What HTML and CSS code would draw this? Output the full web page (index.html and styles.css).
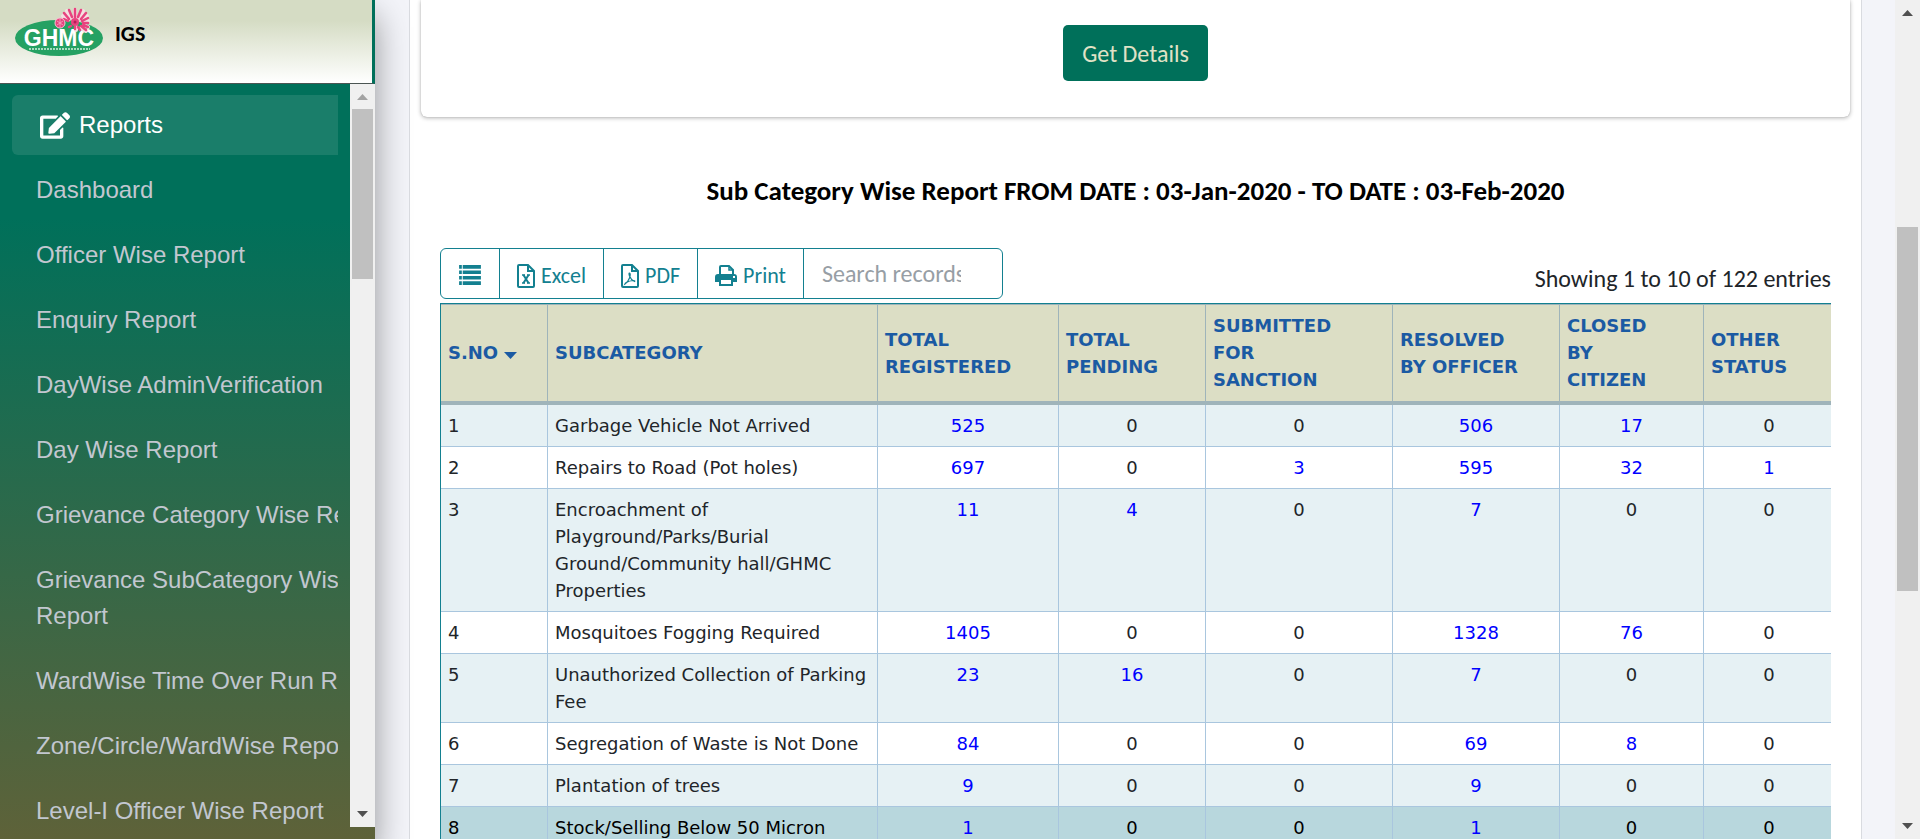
FILE: index.html
```html
<!DOCTYPE html>
<html lang="en">
<head>
<meta charset="utf-8">
<title>IGS - Sub Category Wise Report</title>
<link rel="stylesheet" href="styles.css">
</head>
<body>
<aside class="sidebar">
  <header class="brand">
    <svg class="brand-logo" viewBox="0 0 90 50" role="img" aria-label="GHMC">
      <ellipse cx="44" cy="31" rx="44" ry="18" fill="#25a163"/>
      <text x="44" y="39" text-anchor="middle" class="logo-text">GHMC</text>
      <path d="M14 42h61" stroke="#a9dcc0" stroke-width="2" stroke-dasharray="2 1"/>
      <g stroke="#f6dfe2" stroke-width="4" stroke-linecap="round">
        <path d="M60 10V3M56 11l-4-7M64 11l4-7M53 13l-5-4M67 13l5-4M69 15l4-1M69 18l4 2M66 21l5 3M61 20v3"/>
      </g>
      <g stroke="#e8437f" stroke-width="2.500" stroke-linecap="round">
        <path d="M60 10V2M57 10l-3-7M63 10l3-7M54 12l-5-6M66 12l5-6M53 14l-4-2M67 14l6-3M68 16h5M68 18l5 2M66 19l5 4M63 20l2 3M60 20v2M56 19l-2 1"/>
      </g>
      <circle cx="60" cy="15" r="4" fill="#e8437f"/>
      <circle cx="60" cy="15" r="1.500" fill="#b51f58"/>
      <circle cx="45" cy="16" r="5" fill="#e8437f" stroke="#f9c3d6"/>
      <path d="M42 14l6 4M42 18l6-4M45 12v8" stroke="#f9a7c4" stroke-width=".8"/>
    </svg>
    <span class="brand-name">IGS</span>
  </header>
  <div class="sidebar-body">
    <nav class="nav" aria-label="Reports">
      <ul class="nav-list">
        <li><a class="nav-link active" href="#">
          <svg class="nav-icon" viewBox="0 0 576 512" fill="currentColor" aria-hidden="true"><path d="M402.6 83.2l90.2 90.2c3.8 3.8 3.8 10 0 13.8L274.4 405.6l-92.8 10.3c-12.4 1.4-22.9-9.1-21.5-21.5l10.3-92.8L388.8 83.2c3.8-3.8 10-3.8 13.8 0zm162-22.9l-48.8-48.8c-15.2-15.2-39.9-15.2-55.2 0l-35.4 35.4c-3.8 3.8-3.8 10 0 13.8l90.2 90.2c3.8 3.8 10 3.8 13.8 0l35.4-35.4c15.2-15.3 15.2-40 0-55.2zM384 346.2V448H64V128h229.8c3.2 0 6.2-1.3 8.5-3.5l40-40c7.6-7.6 2.2-20.5-8.5-20.5H48C21.5 64 0 85.5 0 112v352c0 26.5 21.5 48 48 48h352c26.5 0 48-21.5 48-48V306.2c0-10.7-12.9-16-20.5-8.5l-40 40c-2.2 2.3-3.5 5.3-3.5 8.5z"/></svg>
          Reports</a></li>
        <li><a class="nav-link" href="#">Dashboard</a></li>
        <li><a class="nav-link" href="#">Officer Wise Report</a></li>
        <li><a class="nav-link" href="#">Enquiry Report</a></li>
        <li><a class="nav-link" href="#">DayWise AdminVerification</a></li>
        <li><a class="nav-link" href="#">Day Wise Report</a></li>
        <li><a class="nav-link" href="#">Grievance Category Wise Report</a></li>
        <li><a class="nav-link" href="#">Grievance SubCategory Wise Report</a></li>
        <li><a class="nav-link" href="#">WardWise Time Over Run Report</a></li>
        <li><a class="nav-link" href="#">Zone/Circle/WardWise Report</a></li>
        <li><a class="nav-link" href="#">Level-I Officer Wise Report</a></li>
      </ul>
    </nav>
    <div class="scrollbar scrollbar-nav" aria-hidden="true">
      <svg class="arrow" viewBox="0 0 11 6"><path d="M0 6L5.500 0 11 6z" fill="#a3a3a3"/></svg>
      <div class="thumb"></div>
      <svg class="arrow" viewBox="0 0 11 6"><path d="M0 0h11L5.500 6z" fill="#505050"/></svg>
    </div>
  </div>
</aside>

<main class="main">
  <div class="page-card">
    <section class="filter-card">
      <button class="btn-details" type="button">Get Details</button>
    </section>
    <h1 class="title">Sub Category Wise Report FROM DATE : 03-Jan-2020 - TO DATE : 03-Feb-2020</h1>
    <section class="report">
      <div class="table-top">
        <div class="toolbar">
          <button class="tool" type="button" aria-label="Rows">
            <svg class="icon-list" viewBox="0 0 24 22" fill="currentColor"><path d="M0 0h3v4H0zM4 0h20v4H4zM0 6h3v4H0zM4 6h20v4H4zM0 12h3v4H0zM4 12h20v4H4zM0 18h3v4H0zM4 18h20v4H4z"/></svg>
          </button>
          <button class="tool" type="button">
            <svg class="icon-file" viewBox="0 0 18 24" fill="none" stroke="currentColor" stroke-width="2"><path d="M2 1h9l6 6v15q0 1-1 1H2q-1 0-1-1V2q0-1 1-1zM11 1v6h6"/><path d="M5 11h3M10 11h3M5 19h3M10 19h3" stroke-width="1.500"/><path d="M6.500 11l5 8M11.500 11l-5 8"/></svg>
            Excel</button>
          <button class="tool" type="button">
            <svg class="icon-file" viewBox="0 0 18 24" fill="none" stroke="currentColor" stroke-width="2"><path d="M2 1h9l6 6v15q0 1-1 1H2q-1 0-1-1V2q0-1 1-1zM11 1v6h6"/><path d="M4 20q3-2 4.500-6t0-5q-1 0 0 3 1.500 4 5 5.500 1-.5-1-1-4 0-8 2.500z" stroke-width="1.200"/></svg>
            PDF</button>
          <button class="tool" type="button">
            <svg class="icon-print" viewBox="0 0 22 21" fill="currentColor"><path d="M5 10V2q0-1 1-1h8l4 4v5" fill="none" stroke="currentColor" stroke-width="2"/><path d="M14 1v4h4" fill="none" stroke="currentColor" stroke-width="1.500"/><path fill-rule="evenodd" d="M3 9h16q3 0 3 3v5h-4v-2H4v2H0v-5q0-3 3-3zm15 2h2v2h-2z"/><path d="M5 15v5h12v-5" fill="none" stroke="currentColor" stroke-width="2"/></svg>
            Print</button>
          <input class="search" type="text" placeholder="Search records" aria-label="Search records">
        </div>
        <p class="info">Showing 1 to 10 of 122 entries</p>
      </div>
      <div class="table-wrap">
        <table class="grid">
          <colgroup><col class="c-sno"><col class="c-sub"><col class="c-reg"><col class="c-pen"><col class="c-san"><col class="c-res"><col class="c-clo"><col class="c-oth"></colgroup>
          <thead>
            <tr><th>S.NO <svg class="sort" viewBox="0 0 13 7" aria-hidden="true"><path d="M0 0h13L6.500 7z" fill="currentColor"/></svg></th><th>SUBCATEGORY</th><th>TOTAL<br>REGISTERED</th><th>TOTAL<br>PENDING</th><th>SUBMITTED<br>FOR<br>SANCTION</th><th>RESOLVED<br>BY OFFICER</th><th>CLOSED<br>BY<br>CITIZEN</th><th>OTHER<br>STATUS</th></tr>
          </thead>
          <tbody>
            <tr><td>1</td><td>Garbage Vehicle Not Arrived</td><td><a href="#">525</a></td><td>0</td><td>0</td><td><a href="#">506</a></td><td><a href="#">17</a></td><td>0</td></tr>
            <tr><td>2</td><td>Repairs to Road (Pot holes)</td><td><a href="#">697</a></td><td>0</td><td><a href="#">3</a></td><td><a href="#">595</a></td><td><a href="#">32</a></td><td><a href="#">1</a></td></tr>
            <tr><td>3</td><td>Encroachment of Playground/Parks/Burial Ground/Community hall/GHMC Properties</td><td><a href="#">11</a></td><td><a href="#">4</a></td><td>0</td><td><a href="#">7</a></td><td>0</td><td>0</td></tr>
            <tr><td>4</td><td>Mosquitoes Fogging Required</td><td><a href="#">1405</a></td><td>0</td><td>0</td><td><a href="#">1328</a></td><td><a href="#">76</a></td><td>0</td></tr>
            <tr><td>5</td><td>Unauthorized Collection of Parking Fee</td><td><a href="#">23</a></td><td><a href="#">16</a></td><td>0</td><td><a href="#">7</a></td><td>0</td><td>0</td></tr>
            <tr><td>6</td><td>Segregation of Waste is Not Done</td><td><a href="#">84</a></td><td>0</td><td>0</td><td><a href="#">69</a></td><td><a href="#">8</a></td><td>0</td></tr>
            <tr><td>7</td><td>Plantation of trees</td><td><a href="#">9</a></td><td>0</td><td>0</td><td><a href="#">9</a></td><td>0</td><td>0</td></tr>
            <tr class="hovered"><td>8</td><td>Stock/Selling Below 50 Micron</td><td><a href="#">1</a></td><td>0</td><td>0</td><td><a href="#">1</a></td><td>0</td><td>0</td></tr>
          </tbody>
        </table>
      </div>
    </section>
  </div>
</main>
<div class="scrollbar scrollbar-page" aria-hidden="true">
  <svg class="arrow" viewBox="0 0 11 6"><path d="M0 6L5.500 0 11 6z" fill="#505050"/></svg>
  <div class="thumb"></div>
  <svg class="arrow" viewBox="0 0 11 6"><path d="M0 0h11L5.500 6z" fill="#505050"/></svg>
</div>
</body>
</html>
```
FILE: styles.css
```css
* { box-sizing: border-box; }
body {
  margin: 0;
  height: 100vh;
  display: flex;
  overflow: hidden;
  background: #f3f4f9;
  color: #212529;
  font-family: Carlito, Lato, sans-serif;
  font-size: 24px;
}
a { text-decoration: none; }

/* sidebar */
.sidebar {
  width: 375px;
  flex: none;
  display: flex;
  flex-direction: column;
  background: linear-gradient(#00705a 26%, #5e6239 100%);
  box-shadow: 0 16px 32px rgba(0, 0, 0, .4);
  z-index: 1;
}
.brand {
  flex: none;
  height: 84px;
  padding: 7px 0 0 15px;
  display: flex;
  align-items: flex-start;
  gap: 10px;
  border-right: 3px solid #00705a;
  border-bottom: 1px solid #4b5553;
  background: linear-gradient(#d5dcc4 25%, #fff 100%);
}
.brand-logo { width: 90px; height: 50px; }
.logo-text { font: bold 23px "Liberation Sans", sans-serif; fill: #fff; }
.brand-name { font-size: 22px; font-weight: 700; line-height: 24px; padding-top: 15px; color: #000; }
.sidebar-body { flex: 1; min-height: 0; display: flex; padding-bottom: 12px; }
.nav { flex: 1; min-width: 0; margin: 0 12px -12px; padding-top: 11px; overflow: hidden; }
.nav-list {
  width: 418px;
  margin: 0;
  padding: 0;
  list-style: none;
  display: grid;
  gap: 5px;
}
.nav-link {
  display: flex;
  align-items: center;
  gap: 9px;
  padding: 12px 24px;
  border-radius: 6px;
  color: #c2c7d0;
  font: 24px/36px "Liberation Sans", Arial, sans-serif;
}
.nav-link.active { background: rgba(255, 255, 255, .1); color: #fff; padding-left: 28px; }
.nav-icon { width: 30px; height: 27px; }

/* scrollbars */
.scrollbar {
  width: 25px;
  flex: none;
  padding: 10px 2px;
  display: flex;
  flex-direction: column;
  align-items: center;
  background: #f0f0f0;
}
.scrollbar .arrow { width: 11px; height: 6px; flex: none; }
.scrollbar .arrow:last-child { margin-top: auto; }
.thumb { width: 100%; background: #c0c0c0; }
.scrollbar-nav .thumb { height: 170px; margin-top: 9px; }
.scrollbar-page .thumb { height: 364px; margin-top: 211px; }

/* page */
.main { flex: 1; min-width: 0; padding: 0 33px 0 34px; }
.page-card {
  min-height: 100%;
  padding: 0 11px;
  background: #fff;
  border: 1px solid #d9dbe0;
  border-width: 0 1px;
}
.filter-card {
  padding: 25px 0 36px;
  display: flex;
  justify-content: center;
  border-radius: 0 0 6px 6px;
  box-shadow: 0 0 1px rgba(0, 0, 0, .25), 0 1px 4px rgba(0, 0, 0, .3);
}
.btn-details {
  height: 56px;
  padding: 0 19px;
  border: 0;
  border-radius: 5px;
  background: #00705a;
  color: #e0e2c6;
  font: inherit;
}
.title {
  margin: 59px 0 42px;
  text-align: center;
  color: #000;
  font-size: 27px;
  line-height: 30px;
}
.report { padding: 0 19px; }
.table-top { display: flex; justify-content: space-between; align-items: flex-end; padding-bottom: 4px; }
.toolbar {
  display: flex;
  height: 51px;
  border: 1px solid #138090;
  border-radius: 6px;
}
.tool {
  display: flex;
  align-items: center;
  gap: 6px;
  padding: 4px 17px 0;
  border: 0;
  border-right: 1px solid #138090;
  background: none;
  color: #138090;
  font: inherit;
  font-size: 22px;
}
.icon-list { width: 24px; height: 22px; padding-bottom: 2px; }
.icon-file { width: 18px; height: 24px; }
.icon-print { width: 22px; height: 21px; }
.search {
  width: 198px;
  padding: 0 41px 0 18px;
  border: 0;
  background: none;
  color: #495057;
  font: inherit;
  outline: 0;
}
.search::placeholder { color: #979ea5; }
.info { margin: 0; line-height: 30px; padding-bottom: 5px; }

/* table */
.table-wrap { overflow: hidden; border: 1px solid #138090; border-width: 1px 0 0 1px; }
.grid {
  width: calc(100% + 4px);
  table-layout: fixed;
  border-collapse: separate;
  border-spacing: 0;
  font: 18px/27px "DejaVu Sans", Verdana, sans-serif;
}
.c-sno { width: 107px; }
.c-reg { width: 13%; }
.c-pen { width: 147px; }
.c-san { width: 187px; }
.c-res { width: 12%; }
.c-clo { width: 144px; }
.c-oth { width: 131px; }
.c-sub { width: 330px; }
.grid th {
  padding: 7px 7px 8px;
  text-align: left;
  color: #1b5aa3;
  background: #dcdec5;
  border: solid #9fb4ba;
  border-width: 1px 1px 4px 0;
}
.grid td {
  padding: 7px;
  vertical-align: top;
  text-align: center;
  border: solid #a9c6de;
  border-width: 0 1px 1px 0;
}
.grid td:nth-child(-n+2) { text-align: left; }
.grid tbody tr:nth-child(odd) { background: #e6f1f4; }
.grid tbody tr.hovered { background: #b8d7dd; color: #000; }
.grid a { color: #00f; }
.sort { width: 13px; height: 7px; }
```
